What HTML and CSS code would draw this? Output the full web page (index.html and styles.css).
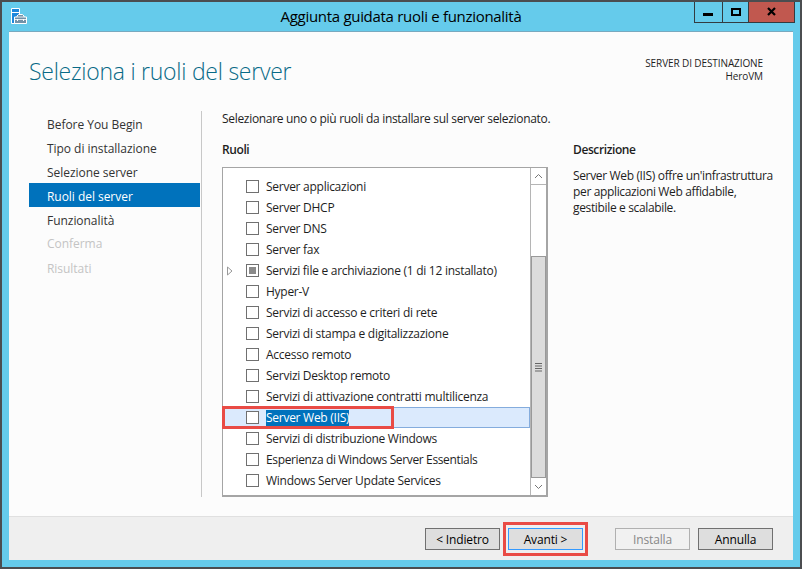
FILE: index.html
```html
<!DOCTYPE html>
<html lang="it">
<head>
<meta charset="utf-8">
<title>Aggiunta guidata ruoli e funzionalità</title>
<link rel="stylesheet" href="styles.css">
</head>
<body>
<div class="window">
  <header class="titlebar">
    <svg class="app-icon" width="18" height="18" viewBox="0 0 18 18">
      <path d="M1.500 1.500h8v15h-8z" fill="#1e88dc" stroke="#fff"/>
      <path d="M2 5.500h7" stroke="#fff"/>
      <path d="M4.500 16.500v-6.500h2.500v-1l1.500-1.500h4l1.500 1.500v1h2.500v6.500z" fill="#7292a8" stroke="#fff"/>
      <path d="M7 10h7M5 12.500h11" fill="none" stroke="#fff" stroke-width=".8"/>
      <path d="M7.500 12v2M13.500 12v2" stroke="#fff"/>
    </svg>
    <div class="title">Aggiunta guidata ruoli e funzionalità</div>
    <div class="controls">
      <div class="control min"><svg width="27" height="20"><path d="M8 13.500h10" stroke="#000" stroke-width="3"/></svg></div>
      <div class="control max"><svg width="25" height="20"><path d="M9 9h8v6h-8z" fill="none" stroke="#000" stroke-width="2"/></svg></div>
      <div class="control close"><svg width="45" height="20"><path d="M19 8l7 7M26 8l-7 7" stroke="#000" stroke-width="2.200"/></svg></div>
    </div>
  </header>
  <main class="client">
    <div class="heading">
      <h1>Seleziona i ruoli del server</h1>
      <div class="destination"><div>SERVER DI DESTINAZIONE</div><div class="host">HeroVM</div></div>
    </div>
    <div class="body">
      <nav class="steps">
        <div class="step"><span>Before You Begin</span></div>
        <div class="step"><span>Tipo di installazione</span></div>
        <div class="step"><span>Selezione server</span></div>
        <div class="step current"><span>Ruoli del server</span></div>
        <div class="step"><span>Funzionalità</span></div>
        <div class="step disabled raised"><span>Conferma</span></div>
        <div class="step disabled"><span>Risultati</span></div>
      </nav>
      <section class="roles">
        <p class="intro">Selezionare uno o più ruoli da installare sul server selezionato.</p>
        <h2>Ruoli</h2>
        <div class="listbox">
          <div class="list">
            <div class="role"><i class="check"></i><span>Server applicazioni</span></div>
            <div class="role"><i class="check"></i><span>Server DHCP</span></div>
            <div class="role"><i class="check"></i><span>Server DNS</span></div>
            <div class="role"><i class="check"></i><span>Server fax</span></div>
            <div class="role"><svg class="expander" width="7" height="10"><path d="M.500 1l4.500 4l-4.500 4z" fill="#fff" stroke="#999"/></svg><i class="check partial"></i><span>Servizi file e archiviazione (1 di 12 installato)</span></div>
            <div class="role"><i class="check"></i><span>Hyper-V</span></div>
            <div class="role"><i class="check"></i><span>Servizi di accesso e criteri di rete</span></div>
            <div class="role"><i class="check"></i><span>Servizi di stampa e digitalizzazione</span></div>
            <div class="role"><i class="check"></i><span>Accesso remoto</span></div>
            <div class="role"><i class="check"></i><span>Servizi Desktop remoto</span></div>
            <div class="role"><i class="check"></i><span>Servizi di attivazione contratti multilicenza</span></div>
            <div class="role selected"><i class="check"></i><span>Server Web (IIS)</span></div>
            <div class="role"><i class="check"></i><span>Servizi di distribuzione Windows</span></div>
            <div class="role tight"><i class="check"></i><span>Esperienza di Windows Server Essentials</span></div>
            <div class="role"><i class="check"></i><span>Windows Server Update Services</span></div>
          </div>
          <div class="scrollbar">
            <div class="arrow"><svg width="9" height="6"><path d="M1 5l3.500-3.500l3.500 3.500" fill="none" stroke="#777"/></svg></div>
            <div class="track"></div>
            <div class="thumb"><svg width="7" height="9"><path d="M0 .500h7M0 3h7M0 5.500h7M0 8h7" stroke="#666"/></svg></div>
            <div class="arrow down"><svg width="9" height="6"><path d="M1 1l3.500 3.500l3.500-3.500" fill="none" stroke="#777"/></svg></div>
          </div>
        </div>
      </section>
      <aside class="description">
        <h2>Descrizione</h2>
        <p>Server Web (IIS) offre un'infrastruttura<br>per applicazioni Web affidabile,<br>gestibile e scalabile.</p>
      </aside>
    </div>
    <footer class="footer">
      <div class="button">&lt; Indietro</div>
      <div class="button primary">Avanti &gt;</div>
      <div class="button inactive">Installa</div>
      <div class="button">Annulla</div>
    </footer>
  </main>
</div>
</body>
</html>
```
FILE: styles.css
```css
*, *::after { box-sizing: border-box; }
body { margin: 0; font: 12px/16px "Open Sans", "Noto Sans", sans-serif; color: #1e1e1e; letter-spacing: -0.27px; }
h1, h2, p { margin: 0; font-weight: 400; font-size: inherit; }
svg { display: block; }
.window { width: 802px; height: 569px; border: 2px solid #4b4d50; background: #65cbeb; padding: 0 7px; display: flex; flex-direction: column; }
.titlebar { height: 29px; display: flex; flex: none; position: relative; }
.app-icon { margin: 5px 0 0 1px; }
.title { position: absolute; left: 0; right: 0; top: 2px; text-align: center; font-size: 15px; line-height: 24px; color: #000; letter-spacing: -0.3px; }
.controls { margin-left: auto; margin-right: -2px; display: flex; height: 21px; border: 1px solid #333b40; border-top: 0; }
.control { height: 20px; }
.control svg { margin-top: -1px; }
.control + .control { border-left: 1px solid #333b40; }
.min { width: 27px; }
.max { width: 26px; }
.close { width: 46px; background: #c1584f; }
.control.close svg, .control.max svg { margin-top: -2px; }
.client { width: 784px; height: 529px; background: #fcfcfc; border-top: 1px solid #78a9bf; display: flex; flex-direction: column; }
.heading { height: 79px; flex: none; display: flex; justify-content: space-between; padding: 22px 30px 0 20px; }
h1 { font-size: 23px; line-height: 34px; font-weight: 300; color: #086a87; letter-spacing: -0.26px; }
.destination { text-align: right; font-size: 10px; line-height: 13px; padding-top: 3px; letter-spacing: -0.1px; }
.body { flex: 1; display: flex; padding-left: 20px; }
.steps { width: 173px; height: 386px; border-right: 1px solid #c8c8c8; letter-spacing: -0.04px; }
.step { width: 171px; height: 24px; line-height: 27px; padding-left: 18px; color: #333; }
.current { background: #0072bc; color: #fff; }
.disabled { color: #c4c4c4; }
.raised { line-height: 25px; }
.roles { width: 326px; margin-left: 20px; }
.intro { line-height: 16px; white-space: nowrap; letter-spacing: -0.31px; }
h2 { line-height: 16px; margin-top: 15px; font-weight: 600; letter-spacing: -0.4px; }
.listbox { margin-top: 9px; height: 330px; border: 1px solid #a5a5a5; border-right-width: 2px; border-bottom-width: 2px; background: #fff; display: flex; }
.list { flex: 1; padding-top: 8px; }
.role { position: relative; height: 21px; display: flex; align-items: center; padding-left: 23px; }
.role span { margin-left: 7px; }
.tight { letter-spacing: -0.36px; }
.check { width: 13px; height: 13px; border: 1px solid #707070; background: #fff; flex: none; }
.partial { background: #8a8a8a; box-shadow: inset 0 0 0 2px #fff; }
.expander { position: absolute; left: 4px; top: 6px; }
.selected { background: #dbeafd; box-shadow: inset 0 0 0 1px #84acdd; }
.selected span { background: #0072bc; color: #fff; }
.selected::after { content: ""; position: absolute; left: -1px; top: -1px; width: 172px; height: 23px; border: 3px solid #e94b45; }
.scrollbar { width: 16px; border-left: 1px solid #b5b5b5; display: flex; flex-direction: column; }
.arrow { height: 17px; border-bottom: 1px solid #b5b5b5; display: flex; align-items: center; justify-content: center; }
.track { height: 71px; }
.thumb { flex: 1; background: #dcdcdc; border: 1px solid #999; display: flex; align-items: center; justify-content: center; }
.down { border: 0; }
.description { margin-left: 25px; padding-top: 16px; }
.description p { margin-top: 10px; letter-spacing: -0.35px; }
.footer { height: 44px; flex: none; background: #efefef; border-top: 1px solid #e0e0e0; display: flex; padding: 11px 20px 0 0; justify-content: flex-end; }
.button { width: 75px; height: 22px; border: 1px solid #707070; background: #dedede; text-align: center; line-height: 22px; color: #000; margin-left: 8px; position: relative; letter-spacing: -0.15px; }
.primary { border-color: #3399ff; }
.primary::after { content: ""; position: absolute; left: -6px; top: -7px; width: 85px; height: 34px; border: 3px solid #e94b45; }
.inactive { margin-left: 32px; background: #f1f1f1; border-color: #b0b0b0; color: #888; }
```
